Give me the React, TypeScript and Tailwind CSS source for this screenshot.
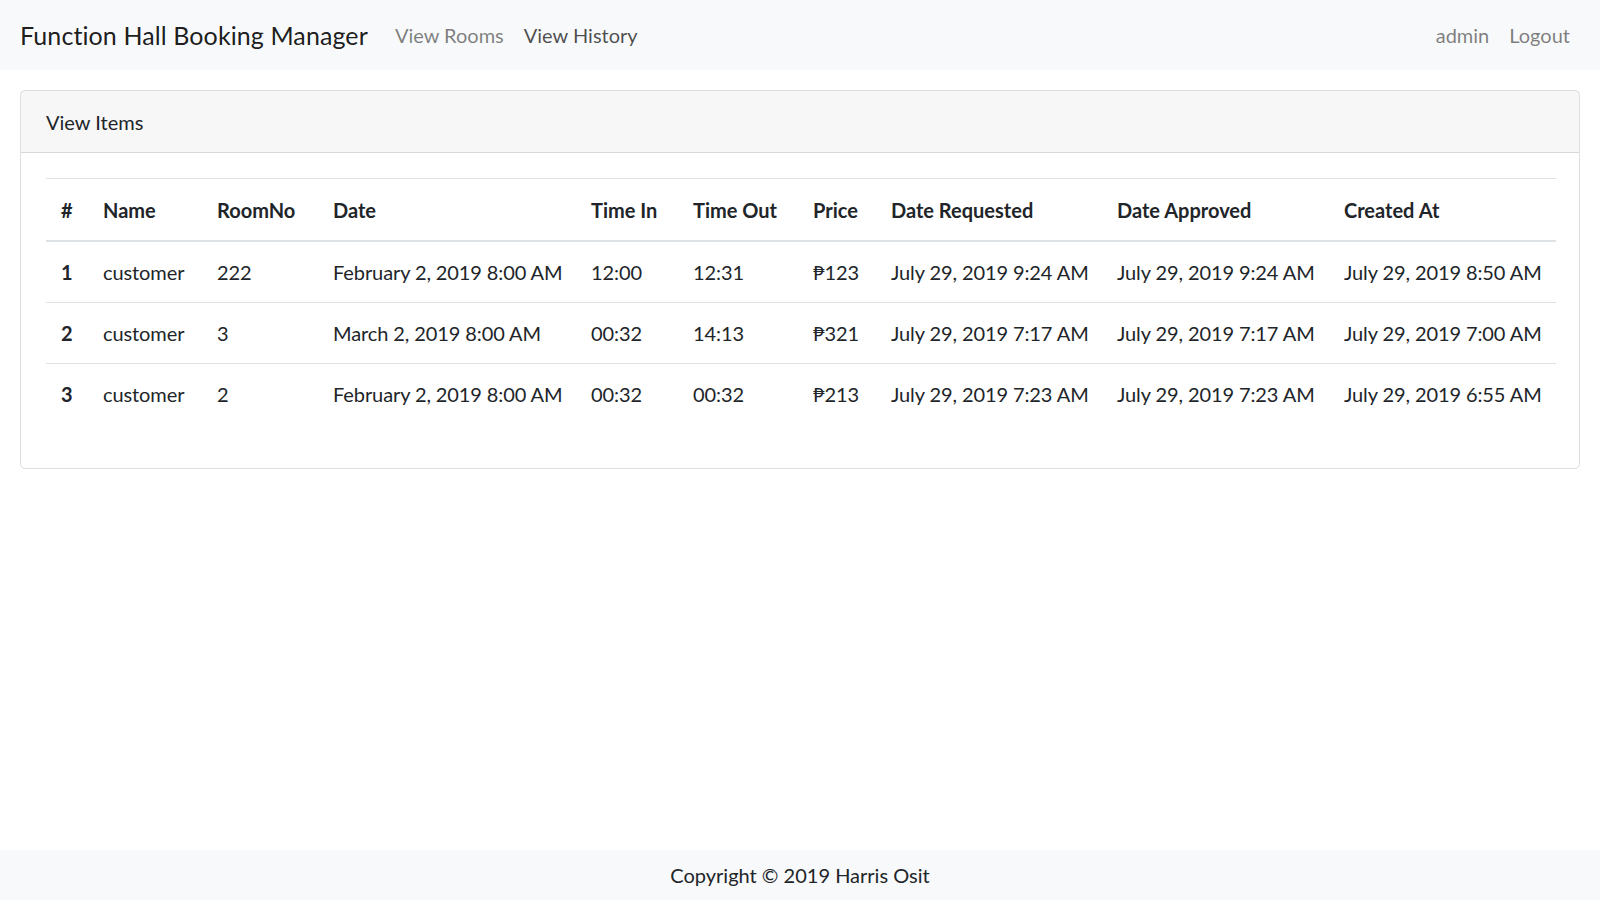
const rows = [
  {
    id: 1,
    name: "customer",
    room: "222",
    date: "February 2, 2019 8:00 AM",
    timeIn: "12:00",
    timeOut: "12:31",
    price: "₱123",
    requested: "July 29, 2019 9:24 AM",
    approved: "July 29, 2019 9:24 AM",
    created: "July 29, 2019 8:50 AM",
  },
  {
    id: 2,
    name: "customer",
    room: "3",
    date: "March 2, 2019 8:00 AM",
    timeIn: "00:32",
    timeOut: "14:13",
    price: "₱321",
    requested: "July 29, 2019 7:17 AM",
    approved: "July 29, 2019 7:17 AM",
    created: "July 29, 2019 7:00 AM",
  },
  {
    id: 3,
    name: "customer",
    room: "2",
    date: "February 2, 2019 8:00 AM",
    timeIn: "00:32",
    timeOut: "00:32",
    price: "₱213",
    requested: "July 29, 2019 7:23 AM",
    approved: "July 29, 2019 7:23 AM",
    created: "July 29, 2019 6:55 AM",
  },
];

const headers = [
  { label: "#", w: "w-[42px]" },
  { label: "Name", w: "w-[114px]" },
  { label: "RoomNo", w: "w-[116px]" },
  { label: "Date", w: "w-[258px]" },
  { label: "Time In", w: "w-[102px]" },
  { label: "Time Out", w: "w-[120px]" },
  { label: "Price", w: "w-[78px]" },
  { label: "Date Requested", w: "w-[226px]" },
  { label: "Date Approved", w: "w-[227px]" },
  { label: "Created At", w: "w-[227px]" },
];

export default function App() {
  return (
    <div className="flex min-h-[900px] flex-col bg-white font-['Lato','Liberation_Sans',sans-serif] text-[20px] text-[#212529]">
      <nav className="flex h-[70px] items-center bg-[#f8f9fa] px-5">
        <a className="mr-[17px] text-[25px] leading-[37px] tracking-[0.1px] text-black/90">
          Function Hall Booking Manager
        </a>
        <ul className="flex">
          <li className="px-[10px] text-black/50">View Rooms</li>
          <li className="px-[10px] text-black/70">View History</li>
        </ul>
        <ul className="ml-auto flex">
          <li className="px-[10px] text-black/50">admin</li>
          <li className="px-[10px] text-black/50">Logout</li>
        </ul>
      </nav>

      <main className="flex-1 px-5 pt-5">
        <div className="rounded-[5px] border border-black/[0.125]">
          <div className="border-b border-black/[0.125] bg-black/[0.03] px-[25px] pb-[15px] pt-[16px] leading-[30px]">
            View Items
          </div>
          <div className="p-[25px] pb-[44px]">
            <table className="w-full table-fixed border-collapse">
              <thead>
                <tr className="border-t border-[#dee2e6]">
                  {headers.map((h) => (
                    <th
                      key={h.label}
                      className={`${h.w} whitespace-nowrap border-b-[2.5px] border-[#dee2e6] px-[15px] pb-[15px] pt-[16px] text-left font-bold leading-[30px]`}
                    >
                      {h.label}
                    </th>
                  ))}
                </tr>
              </thead>
              <tbody className="tracking-[-0.1px]">
                {rows.map((r) => (
                  <tr key={r.id} className="border-t border-[#dee2e6] first:border-t-0">
                    <th className="p-[15px] text-left font-bold leading-[30px]">{r.id}</th>
                    <td className="whitespace-nowrap p-[15px] leading-[30px]">{r.name}</td>
                    <td className="whitespace-nowrap p-[15px] leading-[30px]">{r.room}</td>
                    <td className="whitespace-nowrap p-[15px] leading-[30px]">{r.date}</td>
                    <td className="whitespace-nowrap p-[15px] leading-[30px]">{r.timeIn}</td>
                    <td className="whitespace-nowrap p-[15px] leading-[30px]">{r.timeOut}</td>
                    <td className="whitespace-nowrap p-[15px] leading-[30px]">{r.price}</td>
                    <td className="whitespace-nowrap p-[15px] leading-[30px]">{r.requested}</td>
                    <td className="whitespace-nowrap p-[15px] leading-[30px]">{r.approved}</td>
                    <td className="whitespace-nowrap p-[15px] leading-[30px]">{r.created}</td>
                  </tr>
                ))}
              </tbody>
            </table>
          </div>
        </div>
      </main>

      <footer className="flex h-[50px] items-center justify-center bg-[#f8f9fa] text-[20px]">
        Copyright © 2019 Harris Osit
      </footer>
    </div>
  );
}
